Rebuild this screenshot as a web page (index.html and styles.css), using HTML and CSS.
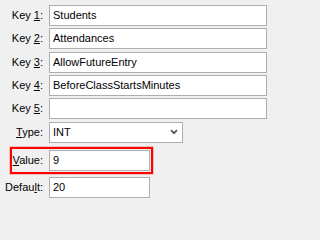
FILE: index.html
```html
<!DOCTYPE html>
<html>
<head>
<meta charset="utf-8">
<link rel="stylesheet" href="styles.css">
</head>
<body>
<div class="form">
  <div class="row">
    <label class="lbl">Key <u>1</u>:</label>
    <div class="field wide">Students</div>
  </div>
  <div class="row">
    <label class="lbl">Key <u>2</u>:</label>
    <div class="field wide">Attendances</div>
  </div>
  <div class="row">
    <label class="lbl">Key <u>3</u>:</label>
    <div class="field wide">AllowFutureEntry</div>
  </div>
  <div class="row">
    <label class="lbl">Key <u>4</u>:</label>
    <div class="field wide">BeforeClassStartsMinutes</div>
  </div>
  <div class="row">
    <label class="lbl">Key <u>5</u>:</label>
    <div class="field wide"></div>
  </div>
  <div class="row">
    <label class="lbl"><u>T</u>ype:</label>
    <div class="field select">
      <span>INT</span>
      <svg class="chev" width="8" height="6" viewBox="0 0 8 6"><polyline points="1,1.2 4,4.2 7,1.2" fill="none" stroke="#555" stroke-width="1.7"/></svg>
    </div>
  </div>
  <div class="row highlight-row">
    <div class="highlight">
      <label class="lbl lbl-inner"><u>V</u>alue:</label>
      <div class="field short">9</div>
    </div>
  </div>
  <div class="row last">
    <label class="lbl">Defau<u>l</u>t:</label>
    <div class="field short">20</div>
  </div>
</div>
</body>
</html>
```

FILE: styles.css
```css
html, body {
  margin: 0;
  padding: 0;
  background: #f0f0f0;
}
body {
  font-family: "Liberation Sans", Arial, sans-serif;
  font-size: 11px;
  color: #000;
  width: 271px;
  height: 202px;
  overflow: hidden;
}
.form {
  display: flex;
  flex-direction: column;
  gap: 2.34px;
  padding-top: 5px;
}
.row {
  display: flex;
  align-items: center;
  gap: 6px;
}
.lbl {
  width: 43px;
  text-align: right;
  white-space: nowrap;
  line-height: 21px;
}
.lbl u {
  text-decoration-thickness: 1px;
  text-underline-offset: 1px;
}
.field {
  box-sizing: border-box;
  height: 21px;
  border: 1px solid #adadad;
  background: #fff;
  padding: 0 3px;
  line-height: 19px;
  white-space: nowrap;
  overflow: hidden;
}
.wide { width: 218px; }
.short { width: 101px; }
.select {
  width: 134px;
  display: flex;
  align-items: center;
  justify-content: space-between;
  padding-right: 4px;
}
.chev { display: block; }
.highlight-row {
  margin-top: 2px;
}
.highlight {
  margin-left: 10px;
  display: flex;
  align-items: center;
  gap: 6px;
  border: 2px solid #ff0000;
  box-shadow: 0 0 0 0.6px rgba(255, 60, 60, 0.45);
  padding: 1px 1px 1px 0;
}
.lbl-inner {
  width: 31px;
}
.last {
  margin-top: 0.66px;
}
```
